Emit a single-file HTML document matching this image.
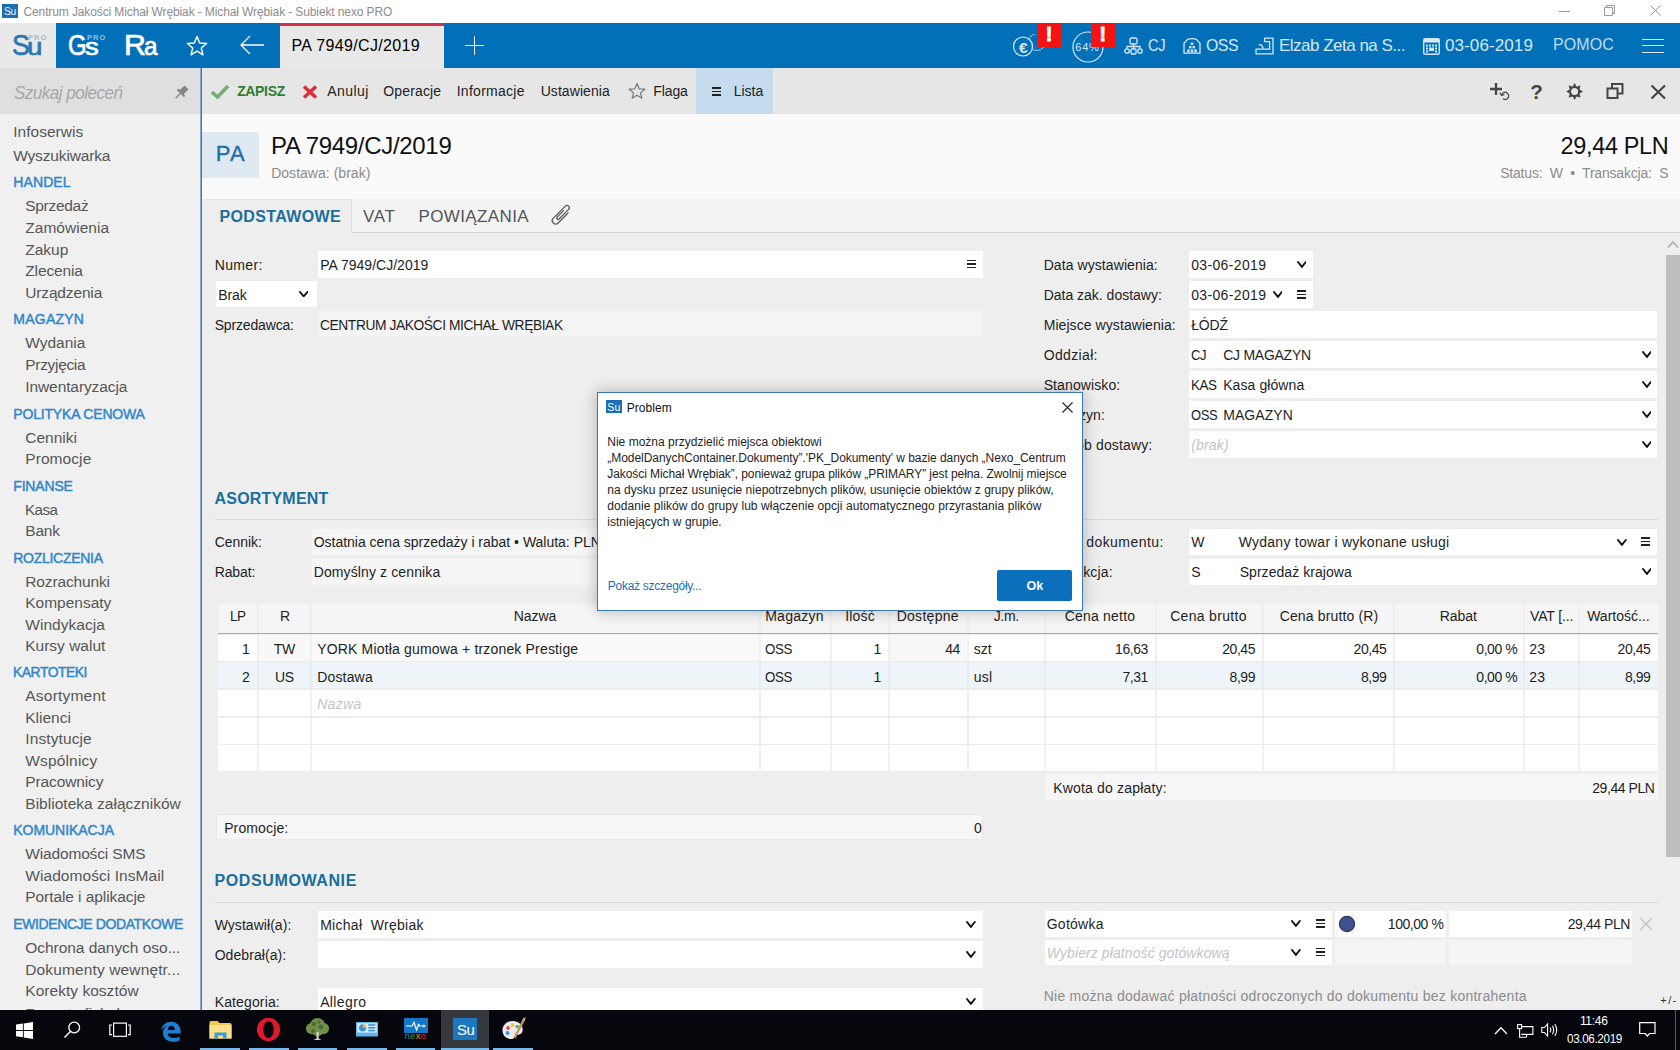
<!DOCTYPE html>
<html lang="pl"><head><meta charset="utf-8"><title>Subiekt nexo PRO</title>
<style>
html,body{margin:0;padding:0;}
body{width:1680px;height:1050px;overflow:hidden;position:relative;background:#eee;font-family:"Liberation Sans", sans-serif;}
.b{position:absolute;box-sizing:border-box;}
.t{position:absolute;white-space:pre;line-height:1;}
</style></head>
<body>
<div class="b" style="left:0px;top:0px;width:1680px;height:23px;background:#ffffff;"></div>
<div class="b" style="left:2px;top:4px;width:16px;height:14px;background:#1c6fb4;"></div>
<span class="t" style="font-size:10.5px;line-height:12px;color:#eaf4fc;top:5px;letter-spacing:-0.315px;transform:scaleX(0.9874);transform-origin:left center;left:4.17px;">Su</span>
<span class="t" style="font-size:12px;line-height:14px;color:#8c8c8c;top:5px;letter-spacing:-0.115px;left:23.48px;">Centrum Jakości Michał Wrębiak - Michał Wrębiak - Subiekt nexo PRO</span>
<div class="b" style="left:1559px;top:10.5px;width:10.5px;height:1px;background:#9a9a9a;"></div>
<svg class="b" style="left:1604px;top:5px;" width="11" height="11" viewBox="0 0 11 11"><path d="M2.5 2.5V0.5H10.5V8.5H8.5M0.5 2.5H8.5V10.5H0.5Z" fill="none" stroke="#9a9a9a" stroke-width="1"/></svg>
<svg class="b" style="left:1650px;top:5px;" width="11" height="11" viewBox="0 0 11 11"><path d="M0.5 0.5L10.5 10.5M10.5 0.5L0.5 10.5" fill="none" stroke="#9a9a9a" stroke-width="1"/></svg>
<div class="b" style="left:0px;top:23px;width:1680px;height:45px;background:#0270b9;"></div>
<div class="b" style="left:0px;top:23px;width:56px;height:45px;background:#e9e9e9;"></div>
<span class="t" style="font-size:29.5px;line-height:33px;color:#2878b4;top:28px;left:11.53px;-webkit-text-stroke:0.7px #2878b4;"><span style="display:inline-block;font-size:29.5px;width:15.76px;transform:scaleX(0.9011);transform-origin:left center;">S</span><span style="display:inline-block;font-size:23.5px;transform:scaleX(1.1791);transform-origin:left center;">u</span></span>
<span class="t" style="font-size:7.5px;line-height:9px;color:#9dbcd6;top:33px;font-weight:bold;letter-spacing:1.045px;left:28.05px;">PRO</span>
<span class="t" style="font-size:29.5px;line-height:33px;color:#fff;top:28px;left:67.93px;-webkit-text-stroke:0.7px #fff;"><span style="display:inline-block;font-size:29.5px;width:16.96px;transform:scaleX(0.8077);transform-origin:left center;">G</span><span style="display:inline-block;font-size:23.5px;transform:scaleX(1.1677);transform-origin:left center;">s</span></span>
<span class="t" style="font-size:7.5px;line-height:9px;color:#8fc0e6;top:33px;font-weight:bold;letter-spacing:1.045px;left:87.05px;">PRO</span>
<span class="t" style="font-size:29.5px;line-height:33px;color:#fff;top:28px;left:123.53px;-webkit-text-stroke:0.7px #fff;"><span style="display:inline-block;font-size:29.5px;width:20.27px;transform:scaleX(1.0294);transform-origin:left center;">R</span><span style="display:inline-block;font-size:25px;transform:scaleX(0.9708);transform-origin:left center;">a</span></span>
<svg class="b" style="left:186px;top:35px;" width="22" height="21" viewBox="0 0 22 21"><path d="M11 1.5 L13.7 8 L20.6 8.5 L15.3 13 L17 19.8 L11 16.1 L5 19.8 L6.7 13 L1.4 8.5 L8.3 8 Z" fill="none" stroke="#fff" stroke-width="1.4" stroke-linejoin="round"/></svg>
<svg class="b" style="left:239px;top:35px;" width="26" height="20" viewBox="0 0 26 20"><path d="M25 10H2M11 1L2 10L11 19" fill="none" stroke="#fff" stroke-width="1.3"/></svg>
<div class="b" style="left:280px;top:23px;width:164px;height:45px;background:#e8e8e8;"></div>
<div class="b" style="left:280px;top:23px;width:164px;height:3px;background:#d6304c;"></div>
<span class="t" style="font-size:16px;line-height:17px;color:#000;top:37px;letter-spacing:0.337px;left:291.54px;">PA 7949/CJ/2019</span>
<div class="b" style="left:464.5px;top:45px;width:19.5px;height:1px;background:#fff;"></div>
<div class="b" style="left:474px;top:36px;width:1px;height:19px;background:#fff;"></div>
<svg class="b" style="left:1011px;top:34px;" width="40" height="26" viewBox="0 0 40 26"><circle cx="26" cy="8" r="8.5" fill="none" stroke="#9cc6e8" stroke-width="1"/><circle cx="12" cy="12.5" r="9.5" fill="#0270b9" stroke="#d6e8f7" stroke-width="1.2"/></svg>
<span class="t" style="font-size:15.5px;line-height:17px;color:#d6e8f7;top:39px;font-weight:bold;left:1023.30px;width:0;display:flex;justify-content:center;">€</span>
<div class="b" style="left:1037.5px;top:23px;width:23px;height:23.5px;background:#f41212;"></div>
<span class="t" style="font-size:19.5px;line-height:22px;color:#fff;top:23px;font-weight:bold;left:1049.00px;width:0;display:flex;justify-content:center;-webkit-text-stroke:0.9px #fff;">!</span>
<svg class="b" style="left:1071px;top:30px;" width="34" height="34" viewBox="0 0 34 34"><circle cx="17" cy="17" r="15" fill="none" stroke="#d6e8f7" stroke-width="1.2"/></svg>
<span class="t" style="font-size:11px;line-height:12px;color:#d6e8f7;top:41px;letter-spacing:0.763px;left:1075.34px;">64%</span>
<div class="b" style="left:1091px;top:23px;width:23.5px;height:23.5px;background:#f41212;"></div>
<span class="t" style="font-size:19.5px;line-height:22px;color:#fff;top:23px;font-weight:bold;left:1102.70px;width:0;display:flex;justify-content:center;-webkit-text-stroke:0.9px #fff;">!</span>
<svg class="b" style="left:1124px;top:37px;" width="19" height="18" viewBox="0 0 19 18"><g fill="none" stroke="#d6e8f7" stroke-width="1.3"><rect x="6" y="1" width="7" height="6" rx="1.5"/><circle cx="3" cy="14" r="2.2"/><rect x="7" y="12" width="5" height="5" rx="1"/><circle cx="16" cy="14" r="2.2"/><path d="M9.5 7V12M9.5 9.5H3V11.8M9.5 9.5H16V11.8"/></g></svg>
<span class="t" style="font-size:17px;line-height:19px;color:#d6e8f7;top:36px;letter-spacing:-0.510px;transform:scaleX(0.8623);transform-origin:left center;left:1147.98px;">CJ</span>
<svg class="b" style="left:1182.5px;top:38px;" width="18" height="16" viewBox="0 0 18 16"><path d="M1 15.2V5.2L4.6 1.4Q9 0 13.4 1.4L17 5.2V15.2Z" fill="none" stroke="#d6e8f7" stroke-width="1.3" stroke-linejoin="round"/><g fill="#d6e8f7"><rect x="7.8" y="4.6" width="2.4" height="2.4"/><rect x="6" y="8" width="2.4" height="2.4"/><rect x="9.6" y="8" width="2.4" height="2.4"/><rect x="4.2" y="11.4" width="2.4" height="3"/><rect x="7.8" y="11.4" width="2.4" height="3"/><rect x="11.4" y="11.4" width="2.4" height="3"/></g></svg>
<span class="t" style="font-size:17px;line-height:19px;color:#d6e8f7;top:36px;letter-spacing:-0.510px;transform:scaleX(0.9320);transform-origin:left center;left:1206.48px;">OSS</span>
<svg class="b" style="left:1254.5px;top:36.5px;" width="19" height="18" viewBox="0 0 19 18"><g fill="none" stroke="#d6e8f7" stroke-width="1.3" stroke-linejoin="round"><path d="M1 12.2H14.6V4.6H9.6V1.2H18V16.8H1Z"/><path d="M3.6 7.6Q7.4 7 8 11.6"/></g></svg>
<span class="t" style="font-size:17px;line-height:19px;color:#d6e8f7;top:36px;letter-spacing:-0.506px;left:1278.98px;">Elzab Zeta na S...</span>
<svg class="b" style="left:1423px;top:37px;" width="17" height="18" viewBox="0 0 17 18"><rect x="0.7" y="1.7" width="15.6" height="15.6" rx="1.5" fill="none" stroke="#d6e8f7" stroke-width="1.4"/><rect x="1" y="2" width="15" height="3.5" fill="#d6e8f7"/><g fill="#d6e8f7"><rect x="3" y="7.5" width="2" height="2"/><rect x="6" y="7.5" width="2" height="2"/><rect x="9" y="7.5" width="2" height="2"/><rect x="12" y="7.5" width="2" height="2"/><rect x="3" y="10.5" width="2" height="2"/><rect x="6" y="10.5" width="5" height="3.5"/><rect x="12" y="10.5" width="2" height="2"/><rect x="3" y="13.5" width="2" height="2"/><rect x="12" y="13.5" width="2" height="2"/></g></svg>
<span class="t" style="font-size:17px;line-height:19px;color:#d6e8f7;top:36px;letter-spacing:0.107px;left:1444.98px;">03-06-2019</span>
<span class="t" style="font-size:16px;line-height:17px;color:#bfdcf3;top:36px;letter-spacing:0.093px;left:1553.04px;">POMOC</span>
<div class="b" style="left:1642px;top:39px;width:22px;height:1.2px;background:#d6e8f7;"></div>
<div class="b" style="left:1642px;top:45.3px;width:22px;height:1.2px;background:#d6e8f7;"></div>
<div class="b" style="left:1642px;top:51.6px;width:22px;height:1.2px;background:#d6e8f7;"></div>
<div class="b" style="left:0px;top:68px;width:200px;height:46px;background:#dfdfdf;"></div>
<div class="b" style="left:202px;top:68px;width:1478px;height:46px;background:#e6e6e6;"></div>
<span class="t" style="font-size:17.5px;line-height:20px;color:#a6a6a6;top:83px;font-style:italic;letter-spacing:-0.525px;transform:scaleX(0.9735);transform-origin:left center;left:13.65px;">Szukaj poleceń</span>
<svg class="b" style="left:172px;top:83.5px;" width="18" height="18" viewBox="0 0 18 18"><g transform="scale(1.12) rotate(45 8 8)" fill="#858585"><rect x="5.5" y="1" width="5" height="6.5"/><rect x="3.5" y="7" width="9" height="1.8"/><rect x="7.4" y="8.8" width="1.2" height="6"/></g></svg>
<svg class="b" style="left:210px;top:84px;" width="20" height="15" viewBox="0 0 20 15"><path d="M2 8L7.5 13L18 2" fill="none" stroke="#76ad76" stroke-width="3.7"/></svg>
<span class="t" style="font-size:14px;line-height:16px;color:#2f7d32;top:83px;font-weight:bold;letter-spacing:-0.350px;left:237.16px;">ZAPISZ</span>
<svg class="b" style="left:301.5px;top:84.5px;" width="16" height="14" viewBox="0 0 16 14"><path d="M2 1.5L14 12.5M14 1.5L2 12.5" fill="none" stroke="#dc2f3a" stroke-width="3.6"/></svg>
<span class="t" style="font-size:14px;line-height:16px;color:#222;top:83px;letter-spacing:0.460px;left:327.16px;">Anuluj</span>
<span class="t" style="font-size:14px;line-height:16px;color:#222;top:83px;letter-spacing:0.171px;left:383.16px;">Operacje</span>
<span class="t" style="font-size:14px;line-height:16px;color:#222;top:83px;letter-spacing:0.282px;left:456.66px;">Informacje</span>
<span class="t" style="font-size:14px;line-height:16px;color:#222;top:83px;letter-spacing:0.070px;left:540.66px;">Ustawienia</span>
<svg class="b" style="left:628px;top:81.5px;" width="18" height="17" viewBox="0 0 18 17"><path d="M9 1.5 L11.2 6.8 L16.8 7.2 L12.5 10.9 L13.9 16.3 L9 13.3 L4.1 16.3 L5.5 10.9 L1.2 7.2 L6.8 6.8 Z" fill="none" stroke="#777" stroke-width="1.2" stroke-linejoin="round"/></svg>
<span class="t" style="font-size:14px;line-height:16px;color:#222;top:83px;letter-spacing:-0.070px;left:653.16px;">Flaga</span>
<div class="b" style="left:696px;top:68px;width:77px;height:46px;background:#c5dcee;"></div>
<div class="b" style="left:712px;top:87px;width:9px;height:1.6px;background:#222;"></div>
<div class="b" style="left:712px;top:90.5px;width:9px;height:1.6px;background:#222;"></div>
<div class="b" style="left:712px;top:94px;width:9px;height:1.6px;background:#222;"></div>
<span class="t" style="font-size:14px;line-height:16px;color:#222;top:83px;letter-spacing:0.020px;left:733.66px;">Lista</span>
<svg class="b" style="left:1489px;top:82.3px;" width="22" height="18" viewBox="0 0 22 18"><path d="M7 1V13M1 7H13" fill="none" stroke="#454545" stroke-width="2.3"/><path d="M12.5 13.2A3.6 3.6 0 1 1 14 16.8" fill="none" stroke="#454545" stroke-width="1.2"/><path d="M10.8 10.8L12.6 13.6L15.4 12.4" fill="none" stroke="#454545" stroke-width="1.2"/></svg>
<span class="t" style="font-size:20.5px;line-height:23px;color:#454545;top:80px;font-weight:bold;left:1536.50px;width:0;display:flex;justify-content:center;">?</span>
<svg class="b" style="left:1565px;top:82px;" width="19" height="19" viewBox="0 0 19 19"><g transform="translate(9.6 9.5)"><g fill="#454545"><path d="M-1.9 -5L0 -8.4L1.9 -5Z" transform="rotate(0)"/><path d="M-1.9 -5L0 -8.4L1.9 -5Z" transform="rotate(45)"/><path d="M-1.9 -5L0 -8.4L1.9 -5Z" transform="rotate(90)"/><path d="M-1.9 -5L0 -8.4L1.9 -5Z" transform="rotate(135)"/><path d="M-1.9 -5L0 -8.4L1.9 -5Z" transform="rotate(180)"/><path d="M-1.9 -5L0 -8.4L1.9 -5Z" transform="rotate(225)"/><path d="M-1.9 -5L0 -8.4L1.9 -5Z" transform="rotate(270)"/><path d="M-1.9 -5L0 -8.4L1.9 -5Z" transform="rotate(315)"/></g><circle r="5.5" fill="#454545"/><circle r="3.5" fill="#e6e6e6"/></g></svg>
<svg class="b" style="left:1606px;top:83.2px;" width="18" height="16" viewBox="0 0 18 16"><path d="M6 4.5V1H16.5V10.5H12M1.5 5.5H11.5V15H1.5Z" fill="none" stroke="#454545" stroke-width="2"/></svg>
<svg class="b" style="left:1650px;top:83.6px;" width="17" height="16" viewBox="0 0 17 16"><path d="M1.5 1.5L15 14.5M15 1.5L1.5 14.5" fill="none" stroke="#454545" stroke-width="2.2"/></svg>
<div class="b" style="left:0px;top:114px;width:200px;height:896px;background:#f0f0f0;"></div>
<div class="b" style="left:200px;top:68px;width:1px;height:942px;background:#86aed0;"></div>
<div class="b" style="left:201px;top:68px;width:1px;height:942px;background:#3779b2;"></div>
<span class="t" style="font-size:15.5px;line-height:17px;color:#565656;top:123px;letter-spacing:0.038px;left:13.17px;">Infoserwis</span>
<span class="t" style="font-size:15.5px;line-height:17px;color:#565656;top:147px;letter-spacing:-0.146px;left:13.17px;">Wyszukiwarka</span>
<span class="t" style="font-size:14px;line-height:16px;color:#2f86c9;top:174px;letter-spacing:0.114px;left:13.26px;-webkit-text-stroke:0.45px #2f86c9;">HANDEL</span>
<span class="t" style="font-size:15.5px;line-height:17px;color:#565656;top:197px;letter-spacing:-0.303px;left:25.27px;">Sprzedaż</span>
<span class="t" style="font-size:15.5px;line-height:17px;color:#565656;top:219px;letter-spacing:0.020px;left:25.27px;">Zamówienia</span>
<span class="t" style="font-size:15.5px;line-height:17px;color:#565656;top:241px;letter-spacing:-0.007px;left:25.27px;">Zakup</span>
<span class="t" style="font-size:15.5px;line-height:17px;color:#565656;top:262px;letter-spacing:-0.129px;left:25.27px;">Zlecenia</span>
<span class="t" style="font-size:15.5px;line-height:17px;color:#565656;top:284px;letter-spacing:-0.155px;left:25.27px;">Urządzenia</span>
<span class="t" style="font-size:14px;line-height:16px;color:#2f86c9;top:311px;letter-spacing:0.249px;left:13.26px;-webkit-text-stroke:0.45px #2f86c9;">MAGAZYN</span>
<span class="t" style="font-size:15.5px;line-height:17px;color:#565656;top:334px;letter-spacing:-0.016px;left:25.27px;">Wydania</span>
<span class="t" style="font-size:15.5px;line-height:17px;color:#565656;top:356px;letter-spacing:-0.315px;left:25.27px;">Przyjęcia</span>
<span class="t" style="font-size:15.5px;line-height:17px;color:#565656;top:378px;letter-spacing:-0.095px;left:25.27px;">Inwentaryzacja</span>
<span class="t" style="font-size:14px;line-height:16px;color:#2f86c9;top:406px;letter-spacing:-0.173px;left:13.26px;-webkit-text-stroke:0.45px #2f86c9;">POLITYKA CENOWA</span>
<span class="t" style="font-size:15.5px;line-height:17px;color:#565656;top:429px;letter-spacing:-0.020px;left:25.27px;">Cenniki</span>
<span class="t" style="font-size:15.5px;line-height:17px;color:#565656;top:450px;letter-spacing:0.074px;left:25.27px;">Promocje</span>
<span class="t" style="font-size:14px;line-height:16px;color:#2f86c9;top:478px;letter-spacing:-0.172px;left:13.26px;-webkit-text-stroke:0.45px #2f86c9;">FINANSE</span>
<span class="t" style="font-size:15.5px;line-height:17px;color:#565656;top:501px;letter-spacing:-0.465px;transform:scaleX(0.9724);transform-origin:left center;left:25.27px;">Kasa</span>
<span class="t" style="font-size:15.5px;line-height:17px;color:#565656;top:522px;letter-spacing:-0.196px;left:25.27px;">Bank</span>
<span class="t" style="font-size:14px;line-height:16px;color:#2f86c9;top:550px;letter-spacing:-0.282px;left:13.26px;-webkit-text-stroke:0.45px #2f86c9;">ROZLICZENIA</span>
<span class="t" style="font-size:15.5px;line-height:17px;color:#565656;top:573px;letter-spacing:-0.145px;left:25.27px;">Rozrachunki</span>
<span class="t" style="font-size:15.5px;line-height:17px;color:#565656;top:594px;letter-spacing:-0.011px;left:25.27px;">Kompensaty</span>
<span class="t" style="font-size:15.5px;line-height:17px;color:#565656;top:616px;letter-spacing:0.031px;left:25.27px;">Windykacja</span>
<span class="t" style="font-size:15.5px;line-height:17px;color:#565656;top:637px;letter-spacing:-0.006px;left:25.27px;">Kursy walut</span>
<span class="t" style="font-size:14px;line-height:16px;color:#2f86c9;top:664px;letter-spacing:-0.420px;transform:scaleX(0.9856);transform-origin:left center;left:13.26px;-webkit-text-stroke:0.45px #2f86c9;">KARTOTEKI</span>
<span class="t" style="font-size:15.5px;line-height:17px;color:#565656;top:687px;letter-spacing:0.217px;left:25.27px;">Asortyment</span>
<span class="t" style="font-size:15.5px;line-height:17px;color:#565656;top:709px;letter-spacing:-0.016px;left:25.27px;">Klienci</span>
<span class="t" style="font-size:15.5px;line-height:17px;color:#565656;top:730px;letter-spacing:0.108px;left:25.27px;">Instytucje</span>
<span class="t" style="font-size:15.5px;line-height:17px;color:#565656;top:752px;letter-spacing:0.158px;left:25.27px;">Wspólnicy</span>
<span class="t" style="font-size:15.5px;line-height:17px;color:#565656;top:773px;letter-spacing:-0.119px;left:25.27px;">Pracownicy</span>
<span class="t" style="font-size:15.5px;line-height:17px;color:#565656;top:795px;letter-spacing:0.022px;left:25.27px;">Biblioteka załączników</span>
<span class="t" style="font-size:14px;line-height:16px;color:#2f86c9;top:822px;letter-spacing:-0.040px;left:13.26px;-webkit-text-stroke:0.45px #2f86c9;">KOMUNIKACJA</span>
<span class="t" style="font-size:15.5px;line-height:17px;color:#565656;top:845px;letter-spacing:-0.161px;left:25.27px;">Wiadomości SMS</span>
<span class="t" style="font-size:15.5px;line-height:17px;color:#565656;top:867px;letter-spacing:0.069px;left:25.27px;">Wiadomości InsMail</span>
<span class="t" style="font-size:15.5px;line-height:17px;color:#565656;top:888px;letter-spacing:-0.075px;left:25.27px;">Portale i aplikacje</span>
<span class="t" style="font-size:14px;line-height:16px;color:#2f86c9;top:916px;letter-spacing:-0.384px;left:13.26px;-webkit-text-stroke:0.45px #2f86c9;">EWIDENCJE DODATKOWE</span>
<span class="t" style="font-size:15.5px;line-height:17px;color:#565656;top:939px;letter-spacing:-0.043px;left:25.27px;">Ochrona danych oso...</span>
<span class="t" style="font-size:15.5px;line-height:17px;color:#565656;top:961px;letter-spacing:0.129px;left:25.27px;">Dokumenty wewnętr...</span>
<span class="t" style="font-size:15.5px;line-height:17px;color:#565656;top:982px;letter-spacing:0.033px;left:25.27px;">Korekty kosztów</span>
<span class="t" style="font-size:15.5px;line-height:17px;color:#565656;top:1005px;letter-spacing:0.057px;left:25.27px;">Raporty fiskalne</span>
<div class="b" style="left:202px;top:114px;width:1478px;height:85px;background:#fafafa;"></div>
<div class="b" style="left:202px;top:132px;width:57px;height:46px;background:#dfe9f2;"></div>
<span class="t" style="font-size:22px;line-height:25px;color:#1f6ea6;top:141px;letter-spacing:1.211px;left:215.68px;-webkit-text-stroke:0.4px #1f6ea6;">PA</span>
<span class="t" style="font-size:24px;line-height:27px;color:#111;top:132px;letter-spacing:-0.310px;left:271.06px;">PA 7949/CJ/2019</span>
<span class="t" style="font-size:14px;line-height:16px;color:#8c8c8c;top:165px;letter-spacing:0.025px;left:271.16px;">Dostawa: (brak)</span>
<span class="t" style="font-size:23.5px;line-height:26px;color:#111;top:133px;letter-spacing:-0.360px;left:1560.59px;">29,44 PLN</span>
<span class="t" style="font-size:14px;line-height:16px;color:#8c8c8c;top:165px;letter-spacing:-0.192px;left:1500.16px;">Status:  W  •  Transakcja:  S</span>
<div class="b" style="left:202px;top:199px;width:1478px;height:33px;background:#f3f3f3;"></div>
<div class="b" style="left:351px;top:232px;width:1329px;height:1px;background:#d2d2d2;"></div>
<div class="b" style="left:202px;top:199px;width:149.5px;height:34px;background:#eeeeee;border-right:1px solid #dcdcdc;border-top:1px solid #e6e6e6;"></div>
<span class="t" style="font-size:16px;line-height:17px;color:#1b6e9c;top:208px;font-weight:bold;letter-spacing:0.350px;left:219.54px;">PODSTAWOWE</span>
<span class="t" style="font-size:17px;line-height:19px;color:#555;top:207px;letter-spacing:0.664px;left:362.98px;">VAT</span>
<span class="t" style="font-size:17px;line-height:19px;color:#555;top:207px;letter-spacing:0.381px;left:418.48px;">POWIĄZANIA</span>
<svg class="b" style="left:549px;top:202px;" width="26" height="26" viewBox="0 0 26 26"><g transform="translate(12.5 12.8) rotate(-45) translate(-12.15 0)"><path d="M18 3.4L4 3.4A3.4 3.4 0 0 1 4 -3.4L21 -3.4A2.3 2.3 0 0 1 21 1.2L7.5 1.2A1.35 1.35 0 0 1 7.5 -1.5L16.5 -1.5" fill="none" stroke="#5a5a5a" stroke-width="1.3" stroke-linecap="round"/></g></svg>
<span class="t" style="font-size:14px;line-height:16px;color:#1e1e1e;top:257px;letter-spacing:0.379px;left:214.66px;">Numer:</span>
<div class="b" style="left:318px;top:251.2px;width:665px;height:26.6px;background:#fff;"></div>
<span class="t" style="font-size:14px;line-height:16px;color:#1e1e1e;top:257px;letter-spacing:0.016px;left:320.16px;">PA 7949/CJ/2019</span>
<div class="b" style="left:967px;top:259.5px;width:9px;height:1.6px;background:#222;"></div>
<div class="b" style="left:967px;top:263px;width:9px;height:1.6px;background:#222;"></div>
<div class="b" style="left:967px;top:266.5px;width:9px;height:1.6px;background:#222;"></div>
<div class="b" style="left:215.5px;top:281px;width:101px;height:25.5px;background:#fff;"></div>
<span class="t" style="font-size:14px;line-height:16px;color:#1e1e1e;top:287px;letter-spacing:-0.029px;left:218.16px;">Brak</span>
<svg class="b" style="left:299.1px;top:290.8px;" width="9.3" height="6.4" viewBox="0 0 9.3 6.4"><path d="M1 1 L4.65 5.4 L8.3 1" fill="none" stroke="#111" stroke-width="1.9" stroke-linecap="round" stroke-linejoin="round"/></svg>
<span class="t" style="font-size:14px;line-height:16px;color:#1e1e1e;top:317px;letter-spacing:-0.160px;left:214.66px;">Sprzedawca:</span>
<div class="b" style="left:318px;top:310.5px;width:665px;height:25.5px;background:#f4f4f4;"></div>
<span class="t" style="font-size:14px;line-height:16px;color:#1e1e1e;top:317px;letter-spacing:-0.420px;transform:scaleX(0.9848);transform-origin:left center;left:320.16px;">CENTRUM JAKOŚCI MICHAŁ WRĘBIAK</span>
<span class="t" style="font-size:14px;line-height:16px;color:#1e1e1e;top:257px;letter-spacing:0.080px;left:1043.66px;">Data wystawienia:</span>
<div class="b" style="left:1189px;top:251.2px;width:123.5px;height:26.6px;background:#fff;"></div>
<span class="t" style="font-size:14px;line-height:16px;color:#1e1e1e;top:287px;letter-spacing:-0.006px;left:1043.66px;">Data zak. dostawy:</span>
<div class="b" style="left:1189px;top:281.2px;width:123.5px;height:26.6px;background:#fff;"></div>
<span class="t" style="font-size:14px;line-height:16px;color:#1e1e1e;top:317px;letter-spacing:0.073px;left:1043.66px;">Miejsce wystawienia:</span>
<div class="b" style="left:1189px;top:311.2px;width:468px;height:26.6px;background:#fff;"></div>
<span class="t" style="font-size:14px;line-height:16px;color:#1e1e1e;top:347px;letter-spacing:0.353px;left:1043.66px;">Oddział:</span>
<div class="b" style="left:1189px;top:341.2px;width:468px;height:26.6px;background:#fff;"></div>
<span class="t" style="font-size:14px;line-height:16px;color:#1e1e1e;top:377px;letter-spacing:0.109px;left:1043.66px;">Stanowisko:</span>
<div class="b" style="left:1189px;top:371.2px;width:468px;height:26.6px;background:#fff;"></div>
<span class="t" style="font-size:14px;line-height:16px;color:#1e1e1e;top:407px;letter-spacing:0.060px;left:1043.66px;">Magazyn:</span>
<div class="b" style="left:1189px;top:401.2px;width:468px;height:26.6px;background:#fff;"></div>
<span class="t" style="font-size:14px;line-height:16px;color:#1e1e1e;top:437px;letter-spacing:0.137px;left:1043.66px;">Sposób dostawy:</span>
<div class="b" style="left:1189px;top:431.2px;width:468px;height:26.6px;background:#fff;"></div>
<span class="t" style="font-size:14px;line-height:16px;color:#1e1e1e;top:257px;letter-spacing:0.356px;left:1191.16px;">03-06-2019</span>
<svg class="b" style="left:1296.6px;top:261.3px;" width="9.8" height="6.9" viewBox="0 0 9.8 6.9"><path d="M1 1 L4.9 5.9 L8.8 1" fill="none" stroke="#111" stroke-width="1.9" stroke-linecap="round" stroke-linejoin="round"/></svg>
<span class="t" style="font-size:14px;line-height:16px;color:#1e1e1e;top:287px;letter-spacing:0.356px;left:1191.16px;">03-06-2019</span>
<svg class="b" style="left:1272.6px;top:291.3px;" width="9.8" height="6.9" viewBox="0 0 9.8 6.9"><path d="M1 1 L4.9 5.9 L8.8 1" fill="none" stroke="#111" stroke-width="1.9" stroke-linecap="round" stroke-linejoin="round"/></svg>
<div class="b" style="left:1297px;top:290px;width:9px;height:1.6px;background:#222;"></div>
<div class="b" style="left:1297px;top:293.5px;width:9px;height:1.6px;background:#222;"></div>
<div class="b" style="left:1297px;top:297px;width:9px;height:1.6px;background:#222;"></div>
<span class="t" style="font-size:14px;line-height:16px;color:#1e1e1e;top:317px;letter-spacing:-0.166px;left:1191.16px;">ŁÓDŹ</span>
<span class="t" style="font-size:14px;line-height:16px;color:#1e1e1e;top:347px;letter-spacing:-0.420px;transform:scaleX(0.9321);transform-origin:left center;left:1191.16px;">CJ</span>
<span class="t" style="font-size:14px;line-height:16px;color:#1e1e1e;top:347px;letter-spacing:-0.255px;left:1223.16px;">CJ MAGAZYN</span>
<span class="t" style="font-size:14px;line-height:16px;color:#1e1e1e;top:377px;letter-spacing:-0.420px;transform:scaleX(0.9598);transform-origin:left center;left:1191.16px;">KAS</span>
<span class="t" style="font-size:14px;line-height:16px;color:#1e1e1e;top:377px;letter-spacing:0.092px;left:1223.16px;">Kasa główna</span>
<span class="t" style="font-size:14px;line-height:16px;color:#1e1e1e;top:407px;letter-spacing:-0.420px;transform:scaleX(0.9245);transform-origin:left center;left:1191.16px;">OSS</span>
<span class="t" style="font-size:14px;line-height:16px;color:#1e1e1e;top:407px;letter-spacing:0.064px;left:1223.16px;">MAGAZYN</span>
<span class="t" style="font-size:14px;line-height:16px;color:#c2c2c2;top:437px;font-style:italic;letter-spacing:0.186px;left:1191.16px;">(brak)</span>
<svg class="b" style="left:1641.6px;top:351.3px;" width="9.8" height="6.9" viewBox="0 0 9.8 6.9"><path d="M1 1 L4.9 5.9 L8.8 1" fill="none" stroke="#111" stroke-width="1.9" stroke-linecap="round" stroke-linejoin="round"/></svg>
<svg class="b" style="left:1641.6px;top:381.3px;" width="9.8" height="6.9" viewBox="0 0 9.8 6.9"><path d="M1 1 L4.9 5.9 L8.8 1" fill="none" stroke="#111" stroke-width="1.9" stroke-linecap="round" stroke-linejoin="round"/></svg>
<svg class="b" style="left:1641.6px;top:411.3px;" width="9.8" height="6.9" viewBox="0 0 9.8 6.9"><path d="M1 1 L4.9 5.9 L8.8 1" fill="none" stroke="#111" stroke-width="1.9" stroke-linecap="round" stroke-linejoin="round"/></svg>
<svg class="b" style="left:1641.6px;top:441.3px;" width="9.8" height="6.9" viewBox="0 0 9.8 6.9"><path d="M1 1 L4.9 5.9 L8.8 1" fill="none" stroke="#111" stroke-width="1.9" stroke-linecap="round" stroke-linejoin="round"/></svg>
<span class="t" style="font-size:16px;line-height:17px;color:#1b6e9c;top:490px;font-weight:bold;letter-spacing:0.192px;left:214.54px;">ASORTYMENT</span>
<div class="b" style="left:215px;top:519px;width:1443px;height:1px;background:#dadada;"></div>
<span class="t" style="font-size:14px;line-height:16px;color:#1e1e1e;top:534px;letter-spacing:-0.041px;left:214.66px;">Cennik:</span>
<div class="b" style="left:312px;top:529px;width:671px;height:25.5px;background:#f5f5f5;"></div>
<span class="t" style="font-size:14px;line-height:16px;color:#1e1e1e;top:534px;letter-spacing:-0.010px;left:313.66px;">Ostatnia cena sprzedaży i rabat • Waluta: PLN</span>
<span class="t" style="font-size:14px;line-height:16px;color:#1e1e1e;top:564px;letter-spacing:-0.095px;left:214.66px;">Rabat:</span>
<div class="b" style="left:312px;top:559px;width:671px;height:25.5px;background:#f5f5f5;"></div>
<span class="t" style="font-size:14px;line-height:16px;color:#1e1e1e;top:564px;letter-spacing:0.121px;left:313.66px;">Domyślny z cennika</span>
<span class="t" style="font-size:14px;line-height:16px;color:#1e1e1e;top:534px;left:1043.66px;"><span style="display:inline-block;width:42.50px;letter-spacing:-0.420px;">Status </span><span style="display:inline-block;letter-spacing:0.451px;">dokumentu:</span></span>
<div class="b" style="left:1189px;top:528.5px;width:468px;height:26px;background:#fff;"></div>
<span class="t" style="font-size:14px;line-height:16px;color:#1e1e1e;top:534px;letter-spacing:1.461px;left:1191.16px;">W</span>
<span class="t" style="font-size:14px;line-height:16px;color:#1e1e1e;top:534px;letter-spacing:0.257px;left:1238.66px;">Wydany towar i wykonane usługi</span>
<svg class="b" style="left:1617.1px;top:538.8px;" width="9.8" height="6.9" viewBox="0 0 9.8 6.9"><path d="M1 1 L4.9 5.9 L8.8 1" fill="none" stroke="#111" stroke-width="1.9" stroke-linecap="round" stroke-linejoin="round"/></svg>
<div class="b" style="left:1641px;top:537px;width:9px;height:1.6px;background:#222;"></div>
<div class="b" style="left:1641px;top:540.5px;width:9px;height:1.6px;background:#222;"></div>
<div class="b" style="left:1641px;top:544px;width:9px;height:1.6px;background:#222;"></div>
<span class="t" style="font-size:14px;line-height:16px;color:#1e1e1e;top:564px;left:1043.66px;"><span style="display:inline-block;width:39.50px;letter-spacing:-0.730px;">Transa</span><span style="display:inline-block;letter-spacing:0.177px;">kcja:</span></span>
<div class="b" style="left:1189px;top:558.5px;width:468px;height:26px;background:#fff;"></div>
<span class="t" style="font-size:14px;line-height:16px;color:#1e1e1e;top:564px;letter-spacing:0.336px;left:1191.16px;">S</span>
<span class="t" style="font-size:14px;line-height:16px;color:#1e1e1e;top:564px;letter-spacing:0.056px;left:1239.66px;">Sprzedaż krajowa</span>
<svg class="b" style="left:1641.6px;top:568.3px;" width="9.8" height="6.9" viewBox="0 0 9.8 6.9"><path d="M1 1 L4.9 5.9 L8.8 1" fill="none" stroke="#111" stroke-width="1.9" stroke-linecap="round" stroke-linejoin="round"/></svg>
<div class="b" style="left:217.5px;top:603.5px;width:1440px;height:29px;background:#f5f5f5;"></div>
<div class="b" style="left:217.5px;top:632.5px;width:1440px;height:1.7px;background:#a9a9a9;"></div>
<div class="b" style="left:257px;top:603.5px;width:2px;height:29px;background:#eeeeee;"></div>
<div class="b" style="left:310px;top:603.5px;width:2px;height:29px;background:#eeeeee;"></div>
<div class="b" style="left:758.5px;top:603.5px;width:2px;height:29px;background:#eeeeee;"></div>
<div class="b" style="left:829.5px;top:603.5px;width:2px;height:29px;background:#eeeeee;"></div>
<div class="b" style="left:887.8px;top:603.5px;width:2px;height:29px;background:#eeeeee;"></div>
<div class="b" style="left:966.5px;top:603.5px;width:2px;height:29px;background:#eeeeee;"></div>
<div class="b" style="left:1044px;top:603.5px;width:2px;height:29px;background:#eeeeee;"></div>
<div class="b" style="left:1155px;top:603.5px;width:2px;height:29px;background:#eeeeee;"></div>
<div class="b" style="left:1262px;top:603.5px;width:2px;height:29px;background:#eeeeee;"></div>
<div class="b" style="left:1392.8px;top:603.5px;width:2px;height:29px;background:#eeeeee;"></div>
<div class="b" style="left:1522.8px;top:603.5px;width:2px;height:29px;background:#eeeeee;"></div>
<div class="b" style="left:1577.8px;top:603.5px;width:2px;height:29px;background:#eeeeee;"></div>
<div class="b" style="left:217.5px;top:634.5px;width:1440px;height:136.5px;background:#ececec;"></div>
<div class="b" style="left:217.5px;top:634.5px;width:1440px;height:26px;background:#ffffff;"></div>
<div class="b" style="left:257px;top:634.5px;width:2px;height:26px;background:#f0f0f0;"></div>
<div class="b" style="left:310px;top:634.5px;width:2px;height:26px;background:#f0f0f0;"></div>
<div class="b" style="left:758.5px;top:634.5px;width:2px;height:26px;background:#f0f0f0;"></div>
<div class="b" style="left:829.5px;top:634.5px;width:2px;height:26px;background:#f0f0f0;"></div>
<div class="b" style="left:887.8px;top:634.5px;width:2px;height:26px;background:#f0f0f0;"></div>
<div class="b" style="left:966.5px;top:634.5px;width:2px;height:26px;background:#f0f0f0;"></div>
<div class="b" style="left:1044px;top:634.5px;width:2px;height:26px;background:#f0f0f0;"></div>
<div class="b" style="left:1155px;top:634.5px;width:2px;height:26px;background:#f0f0f0;"></div>
<div class="b" style="left:1262px;top:634.5px;width:2px;height:26px;background:#f0f0f0;"></div>
<div class="b" style="left:1392.8px;top:634.5px;width:2px;height:26px;background:#f0f0f0;"></div>
<div class="b" style="left:1522.8px;top:634.5px;width:2px;height:26px;background:#f0f0f0;"></div>
<div class="b" style="left:1577.8px;top:634.5px;width:2px;height:26px;background:#f0f0f0;"></div>
<div class="b" style="left:217.5px;top:662px;width:1440px;height:26px;background:#edf5f9;"></div>
<div class="b" style="left:257px;top:662px;width:2px;height:26px;background:#e6eef3;"></div>
<div class="b" style="left:310px;top:662px;width:2px;height:26px;background:#e6eef3;"></div>
<div class="b" style="left:758.5px;top:662px;width:2px;height:26px;background:#e6eef3;"></div>
<div class="b" style="left:829.5px;top:662px;width:2px;height:26px;background:#e6eef3;"></div>
<div class="b" style="left:887.8px;top:662px;width:2px;height:26px;background:#e6eef3;"></div>
<div class="b" style="left:966.5px;top:662px;width:2px;height:26px;background:#e6eef3;"></div>
<div class="b" style="left:1044px;top:662px;width:2px;height:26px;background:#e6eef3;"></div>
<div class="b" style="left:1155px;top:662px;width:2px;height:26px;background:#e6eef3;"></div>
<div class="b" style="left:1262px;top:662px;width:2px;height:26px;background:#e6eef3;"></div>
<div class="b" style="left:1392.8px;top:662px;width:2px;height:26px;background:#e6eef3;"></div>
<div class="b" style="left:1522.8px;top:662px;width:2px;height:26px;background:#e6eef3;"></div>
<div class="b" style="left:1577.8px;top:662px;width:2px;height:26px;background:#e6eef3;"></div>
<div class="b" style="left:217.5px;top:689.5px;width:1440px;height:26px;background:#ffffff;"></div>
<div class="b" style="left:257px;top:689.5px;width:2px;height:26px;background:#f0f0f0;"></div>
<div class="b" style="left:310px;top:689.5px;width:2px;height:26px;background:#f0f0f0;"></div>
<div class="b" style="left:758.5px;top:689.5px;width:2px;height:26px;background:#f0f0f0;"></div>
<div class="b" style="left:829.5px;top:689.5px;width:2px;height:26px;background:#f0f0f0;"></div>
<div class="b" style="left:887.8px;top:689.5px;width:2px;height:26px;background:#f0f0f0;"></div>
<div class="b" style="left:966.5px;top:689.5px;width:2px;height:26px;background:#f0f0f0;"></div>
<div class="b" style="left:1044px;top:689.5px;width:2px;height:26px;background:#f0f0f0;"></div>
<div class="b" style="left:1155px;top:689.5px;width:2px;height:26px;background:#f0f0f0;"></div>
<div class="b" style="left:1262px;top:689.5px;width:2px;height:26px;background:#f0f0f0;"></div>
<div class="b" style="left:1392.8px;top:689.5px;width:2px;height:26px;background:#f0f0f0;"></div>
<div class="b" style="left:1522.8px;top:689.5px;width:2px;height:26px;background:#f0f0f0;"></div>
<div class="b" style="left:1577.8px;top:689.5px;width:2px;height:26px;background:#f0f0f0;"></div>
<div class="b" style="left:217.5px;top:717.5px;width:1440px;height:26px;background:#ffffff;"></div>
<div class="b" style="left:257px;top:717.5px;width:2px;height:26px;background:#f0f0f0;"></div>
<div class="b" style="left:310px;top:717.5px;width:2px;height:26px;background:#f0f0f0;"></div>
<div class="b" style="left:758.5px;top:717.5px;width:2px;height:26px;background:#f0f0f0;"></div>
<div class="b" style="left:829.5px;top:717.5px;width:2px;height:26px;background:#f0f0f0;"></div>
<div class="b" style="left:887.8px;top:717.5px;width:2px;height:26px;background:#f0f0f0;"></div>
<div class="b" style="left:966.5px;top:717.5px;width:2px;height:26px;background:#f0f0f0;"></div>
<div class="b" style="left:1044px;top:717.5px;width:2px;height:26px;background:#f0f0f0;"></div>
<div class="b" style="left:1155px;top:717.5px;width:2px;height:26px;background:#f0f0f0;"></div>
<div class="b" style="left:1262px;top:717.5px;width:2px;height:26px;background:#f0f0f0;"></div>
<div class="b" style="left:1392.8px;top:717.5px;width:2px;height:26px;background:#f0f0f0;"></div>
<div class="b" style="left:1522.8px;top:717.5px;width:2px;height:26px;background:#f0f0f0;"></div>
<div class="b" style="left:1577.8px;top:717.5px;width:2px;height:26px;background:#f0f0f0;"></div>
<div class="b" style="left:217.5px;top:745px;width:1440px;height:26px;background:#ffffff;"></div>
<div class="b" style="left:257px;top:745px;width:2px;height:26px;background:#f0f0f0;"></div>
<div class="b" style="left:310px;top:745px;width:2px;height:26px;background:#f0f0f0;"></div>
<div class="b" style="left:758.5px;top:745px;width:2px;height:26px;background:#f0f0f0;"></div>
<div class="b" style="left:829.5px;top:745px;width:2px;height:26px;background:#f0f0f0;"></div>
<div class="b" style="left:887.8px;top:745px;width:2px;height:26px;background:#f0f0f0;"></div>
<div class="b" style="left:966.5px;top:745px;width:2px;height:26px;background:#f0f0f0;"></div>
<div class="b" style="left:1044px;top:745px;width:2px;height:26px;background:#f0f0f0;"></div>
<div class="b" style="left:1155px;top:745px;width:2px;height:26px;background:#f0f0f0;"></div>
<div class="b" style="left:1262px;top:745px;width:2px;height:26px;background:#f0f0f0;"></div>
<div class="b" style="left:1392.8px;top:745px;width:2px;height:26px;background:#f0f0f0;"></div>
<div class="b" style="left:1522.8px;top:745px;width:2px;height:26px;background:#f0f0f0;"></div>
<div class="b" style="left:1577.8px;top:745px;width:2px;height:26px;background:#f0f0f0;"></div>
<div class="b" style="left:889.8px;top:634.5px;width:76.7px;height:26px;background:#f7f7f7;"></div>
<div class="b" style="left:259px;top:634.5px;width:51px;height:26px;background:#f8f8f8;"></div>
<div class="b" style="left:312px;top:634.5px;width:446.5px;height:26px;background:#f9f9f9;"></div>
<span class="t" style="font-size:14px;line-height:16px;color:#1e1e1e;top:608px;letter-spacing:-0.420px;transform:scaleX(0.9628);transform-origin:left center;left:229.66px;">LP</span>
<span class="t" style="font-size:14px;line-height:16px;color:#1e1e1e;top:608px;letter-spacing:-0.420px;transform:scaleX(0.9974);transform-origin:left center;left:279.66px;">R</span>
<span class="t" style="font-size:14px;line-height:16px;color:#1e1e1e;top:608px;letter-spacing:-0.023px;left:513.66px;">Nazwa</span>
<span class="t" style="font-size:14px;line-height:16px;color:#1e1e1e;top:608px;letter-spacing:0.267px;left:765.16px;">Magazyn</span>
<span class="t" style="font-size:14px;line-height:16px;color:#1e1e1e;top:608px;letter-spacing:0.177px;left:845.16px;">Ilość</span>
<span class="t" style="font-size:14px;line-height:16px;color:#1e1e1e;top:608px;letter-spacing:0.280px;left:896.66px;">Dostępne</span>
<span class="t" style="font-size:14px;line-height:16px;color:#1e1e1e;top:608px;letter-spacing:-0.318px;left:993.66px;">J.m.</span>
<span class="t" style="font-size:14px;line-height:16px;color:#1e1e1e;top:608px;letter-spacing:0.218px;left:1064.66px;">Cena netto</span>
<span class="t" style="font-size:14px;line-height:16px;color:#1e1e1e;top:608px;letter-spacing:0.319px;left:1170.16px;">Cena brutto</span>
<span class="t" style="font-size:14px;line-height:16px;color:#1e1e1e;top:608px;letter-spacing:0.146px;left:1279.66px;">Cena brutto (R)</span>
<span class="t" style="font-size:14px;line-height:16px;color:#1e1e1e;top:608px;letter-spacing:-0.036px;left:1439.66px;">Rabat</span>
<span class="t" style="font-size:14px;line-height:16px;color:#1e1e1e;top:608px;letter-spacing:-0.122px;left:1529.96px;">VAT [...</span>
<span class="t" style="font-size:14px;line-height:16px;color:#1e1e1e;top:608px;left:1587.16px;">Wartość...</span>
<span class="t" style="font-size:14px;line-height:16px;color:#1e1e1e;top:641px;right:1430.16px;">1</span>
<span class="t" style="font-size:14px;line-height:16px;color:#1e1e1e;top:641px;letter-spacing:-0.450px;left:284.30px;width:0;display:flex;justify-content:center;">TW</span>
<span class="t" style="font-size:14px;line-height:16px;color:#1e1e1e;top:641px;letter-spacing:0.171px;left:317.16px;">YORK Miotła gumowa + trzonek Prestige</span>
<span class="t" style="font-size:14px;line-height:16px;color:#1e1e1e;top:641px;letter-spacing:-0.420px;transform:scaleX(0.9492);transform-origin:left center;left:764.96px;">OSS</span>
<span class="t" style="font-size:14px;line-height:16px;color:#1e1e1e;top:641px;right:798.66px;">1</span>
<span class="t" style="font-size:14px;line-height:16px;color:#1e1e1e;top:641px;letter-spacing:-0.450px;right:720.11px;">44</span>
<span class="t" style="font-size:14px;line-height:16px;color:#1e1e1e;top:641px;letter-spacing:0.096px;left:973.66px;">szt</span>
<span class="t" style="font-size:14px;line-height:16px;color:#1e1e1e;top:641px;letter-spacing:-0.450px;right:532.11px;">16,63</span>
<span class="t" style="font-size:14px;line-height:16px;color:#1e1e1e;top:641px;letter-spacing:-0.450px;right:425.01px;">20,45</span>
<span class="t" style="font-size:14px;line-height:16px;color:#1e1e1e;top:641px;letter-spacing:-0.450px;right:293.61px;">20,45</span>
<span class="t" style="font-size:14px;line-height:16px;color:#1e1e1e;top:641px;letter-spacing:-0.450px;right:162.81px;">0,00 %</span>
<span class="t" style="font-size:14px;line-height:16px;color:#1e1e1e;top:641px;letter-spacing:0.301px;left:1529.16px;">23</span>
<span class="t" style="font-size:14px;line-height:16px;color:#1e1e1e;top:641px;letter-spacing:-0.450px;right:29.61px;">20,45</span>
<span class="t" style="font-size:14px;line-height:16px;color:#1e1e1e;top:669px;right:1430.16px;">2</span>
<span class="t" style="font-size:14px;line-height:16px;color:#1e1e1e;top:669px;letter-spacing:-0.450px;left:284.30px;width:0;display:flex;justify-content:center;">US</span>
<span class="t" style="font-size:14px;line-height:16px;color:#1e1e1e;top:669px;letter-spacing:0.173px;left:317.16px;">Dostawa</span>
<span class="t" style="font-size:14px;line-height:16px;color:#1e1e1e;top:669px;letter-spacing:-0.420px;transform:scaleX(0.9492);transform-origin:left center;left:764.96px;">OSS</span>
<span class="t" style="font-size:14px;line-height:16px;color:#1e1e1e;top:669px;right:798.66px;">1</span>
<span class="t" style="font-size:14px;line-height:16px;color:#1e1e1e;top:669px;letter-spacing:0.258px;left:973.66px;">usl</span>
<span class="t" style="font-size:14px;line-height:16px;color:#1e1e1e;top:669px;letter-spacing:-0.450px;right:532.11px;">7,31</span>
<span class="t" style="font-size:14px;line-height:16px;color:#1e1e1e;top:669px;letter-spacing:-0.450px;right:425.01px;">8,99</span>
<span class="t" style="font-size:14px;line-height:16px;color:#1e1e1e;top:669px;letter-spacing:-0.450px;right:293.61px;">8,99</span>
<span class="t" style="font-size:14px;line-height:16px;color:#1e1e1e;top:669px;letter-spacing:-0.450px;right:162.81px;">0,00 %</span>
<span class="t" style="font-size:14px;line-height:16px;color:#1e1e1e;top:669px;letter-spacing:0.301px;left:1529.16px;">23</span>
<span class="t" style="font-size:14px;line-height:16px;color:#1e1e1e;top:669px;letter-spacing:-0.450px;right:29.61px;">8,99</span>
<span class="t" style="font-size:14px;line-height:16px;color:#c4c4c4;top:696px;font-style:italic;letter-spacing:0.337px;left:317.16px;">Nazwa</span>
<div class="b" style="left:1045px;top:774px;width:612.5px;height:26px;background:#f6f6f6;"></div>
<span class="t" style="font-size:14px;line-height:16px;color:#1e1e1e;top:780px;letter-spacing:0.186px;left:1053.16px;">Kwota do zapłaty:</span>
<span class="t" style="font-size:14px;line-height:16px;color:#1e1e1e;top:780px;letter-spacing:-0.450px;right:25.61px;">29,44 PLN</span>
<div class="b" style="left:215.5px;top:814px;width:767.5px;height:25.5px;background:#f7f7f7;border:1px solid #e9e9e9;"></div>
<span class="t" style="font-size:14px;line-height:16px;color:#1e1e1e;top:820px;letter-spacing:0.128px;left:224.16px;">Promocje:</span>
<span class="t" style="font-size:14px;line-height:16px;color:#1e1e1e;top:820px;right:698.16px;">0</span>
<span class="t" style="font-size:16px;line-height:17px;color:#1b6e9c;top:872px;font-weight:bold;letter-spacing:0.608px;left:214.54px;">PODSUMOWANIE</span>
<div class="b" style="left:215px;top:901.5px;width:1443px;height:1px;background:#dadada;"></div>
<span class="t" style="font-size:14px;line-height:16px;color:#1e1e1e;top:917px;letter-spacing:0.048px;left:214.66px;">Wystawił(a):</span>
<div class="b" style="left:318px;top:911px;width:665px;height:27px;background:#fff;"></div>
<span class="t" style="font-size:14px;line-height:16px;color:#1e1e1e;top:917px;letter-spacing:0.290px;left:320.16px;">Michał  Wrębiak</span>
<svg class="b" style="left:966.1px;top:921.3px;" width="9.8" height="6.9" viewBox="0 0 9.8 6.9"><path d="M1 1 L4.9 5.9 L8.8 1" fill="none" stroke="#111" stroke-width="1.9" stroke-linecap="round" stroke-linejoin="round"/></svg>
<span class="t" style="font-size:14px;line-height:16px;color:#1e1e1e;top:947px;letter-spacing:0.079px;left:214.66px;">Odebrał(a):</span>
<div class="b" style="left:318px;top:941px;width:665px;height:27px;background:#fff;"></div>
<svg class="b" style="left:966.1px;top:951.3px;" width="9.8" height="6.9" viewBox="0 0 9.8 6.9"><path d="M1 1 L4.9 5.9 L8.8 1" fill="none" stroke="#111" stroke-width="1.9" stroke-linecap="round" stroke-linejoin="round"/></svg>
<span class="t" style="font-size:14px;line-height:16px;color:#1e1e1e;top:994px;letter-spacing:0.135px;left:214.66px;">Kategoria:</span>
<div class="b" style="left:318px;top:987.5px;width:665px;height:27px;background:#fff;"></div>
<span class="t" style="font-size:14px;line-height:16px;color:#1e1e1e;top:994px;letter-spacing:0.369px;left:320.16px;">Allegro</span>
<svg class="b" style="left:966.1px;top:998.3px;" width="9.8" height="6.9" viewBox="0 0 9.8 6.9"><path d="M1 1 L4.9 5.9 L8.8 1" fill="none" stroke="#111" stroke-width="1.9" stroke-linecap="round" stroke-linejoin="round"/></svg>
<div class="b" style="left:1044.5px;top:911px;width:287.3px;height:25.5px;background:#fff;"></div>
<span class="t" style="font-size:14px;line-height:16px;color:#1e1e1e;top:916px;letter-spacing:0.276px;left:1046.66px;">Gotówka</span>
<svg class="b" style="left:1291.1px;top:920.3px;" width="9.8" height="6.9" viewBox="0 0 9.8 6.9"><path d="M1 1 L4.9 5.9 L8.8 1" fill="none" stroke="#111" stroke-width="1.9" stroke-linecap="round" stroke-linejoin="round"/></svg>
<div class="b" style="left:1316px;top:919px;width:9px;height:1.6px;background:#222;"></div>
<div class="b" style="left:1316px;top:922.5px;width:9px;height:1.6px;background:#222;"></div>
<div class="b" style="left:1316px;top:926px;width:9px;height:1.6px;background:#222;"></div>
<div class="b" style="left:1335px;top:911px;width:111px;height:25.5px;background:#fff;"></div>
<svg class="b" style="left:1338px;top:914.5px;" width="18" height="18" viewBox="0 0 18 18"><circle cx="9" cy="9" r="7.6" fill="#41508f" stroke="#2a3564" stroke-width="1.2"/></svg>
<span class="t" style="font-size:14px;line-height:16px;color:#1e1e1e;top:916px;letter-spacing:-0.450px;right:236.61px;">100,00 %</span>
<div class="b" style="left:1449.4px;top:911px;width:182.6px;height:25.5px;background:#fff;"></div>
<span class="t" style="font-size:14px;line-height:16px;color:#1e1e1e;top:916px;letter-spacing:-0.450px;right:50.11px;">29,44 PLN</span>
<svg class="b" style="left:1639px;top:916.5px;" width="14" height="14" viewBox="0 0 14 14"><path d="M1 1L13 13M13 1L1 13" fill="none" stroke="#bdbdbd" stroke-width="1.2"/></svg>
<div class="b" style="left:1044.5px;top:939.5px;width:287.3px;height:25.5px;background:#fff;"></div>
<span class="t" style="font-size:14px;line-height:16px;color:#c4c4c4;top:945px;font-style:italic;letter-spacing:0.094px;left:1046.66px;">Wybierz płatność gotówkową</span>
<svg class="b" style="left:1291.1px;top:948.8px;" width="9.8" height="6.9" viewBox="0 0 9.8 6.9"><path d="M1 1 L4.9 5.9 L8.8 1" fill="none" stroke="#111" stroke-width="1.9" stroke-linecap="round" stroke-linejoin="round"/></svg>
<div class="b" style="left:1316px;top:947.5px;width:9px;height:1.6px;background:#222;"></div>
<div class="b" style="left:1316px;top:951px;width:9px;height:1.6px;background:#222;"></div>
<div class="b" style="left:1316px;top:954.5px;width:9px;height:1.6px;background:#222;"></div>
<div class="b" style="left:1335px;top:939.5px;width:111px;height:25.5px;background:#f5f5f5;"></div>
<div class="b" style="left:1449.4px;top:939.5px;width:182.6px;height:25.5px;background:#f5f5f5;"></div>
<span class="t" style="font-size:14px;line-height:16px;color:#8c8c8c;top:988px;letter-spacing:0.250px;left:1043.66px;">Nie można dodawać płatności odroczonych do dokumentu bez kontrahenta</span>
<svg class="b" style="left:1667px;top:239.5px;" width="12" height="8.5" viewBox="0 0 12 8.5"><path d="M1 7.5L6 2L11 7.5" fill="none" stroke="#b4b4b4" stroke-width="1.8"/></svg>
<div class="b" style="left:1666px;top:255px;width:14px;height:602px;background:#bdbdbd;"></div>
<span class="t" style="font-size:11px;line-height:12px;color:#333;top:994px;letter-spacing:1.388px;left:1660.34px;">+/-</span>
<div class="b" style="left:597px;top:392px;width:485.5px;height:219px;background:#fff;border:1px solid #3a7aac;box-shadow:0 0 14px rgba(0,0,0,0.27);"></div>
<div class="b" style="left:606px;top:400.3px;width:16px;height:13.2px;background:#1c6fb4;"></div>
<span class="t" style="font-size:10.5px;line-height:12px;color:#fff;top:401px;letter-spacing:0.208px;left:607.37px;">Su</span>
<span class="t" style="font-size:12px;line-height:14px;color:#111;top:401px;letter-spacing:0.036px;left:626.78px;">Problem</span>
<svg class="b" style="left:1061.5px;top:401.5px;" width="11" height="11" viewBox="0 0 11 11"><path d="M0.5 0.5L10.5 10.5M10.5 0.5L0.5 10.5" fill="none" stroke="#222" stroke-width="1.1"/></svg>
<span class="t" style="font-size:12px;line-height:14px;color:#1e1e1e;top:435px;letter-spacing:0.009px;left:607.28px;">Nie można przydzielić miejsca obiektowi</span>
<span class="t" style="font-size:12px;line-height:14px;color:#1e1e1e;top:451px;letter-spacing:-0.049px;left:607.28px;">„ModelDanychContainer.Dokumenty”.'PK_Dokumenty' w bazie danych „Nexo_Centrum</span>
<span class="t" style="font-size:12px;line-height:14px;color:#1e1e1e;top:467px;letter-spacing:-0.075px;left:607.28px;">Jakości Michał Wrębiak”, ponieważ grupa plików „PRIMARY” jest pełna. Zwolnij miejsce</span>
<span class="t" style="font-size:12px;line-height:14px;color:#1e1e1e;top:483px;letter-spacing:0.010px;left:607.28px;">na dysku przez usunięcie niepotrzebnych plików, usunięcie obiektów z grupy plików,</span>
<span class="t" style="font-size:12px;line-height:14px;color:#1e1e1e;top:499px;letter-spacing:0.058px;left:607.28px;">dodanie plików do grupy lub włączenie opcji automatycznego przyrastania plików</span>
<span class="t" style="font-size:12px;line-height:14px;color:#1e1e1e;top:515px;letter-spacing:0.017px;left:607.28px;">istniejących w grupie.</span>
<span class="t" style="font-size:12px;line-height:14px;color:#1c6fb4;top:579px;letter-spacing:-0.269px;left:607.78px;">Pokaż szczegóły...</span>
<div class="b" style="left:997px;top:569.5px;width:75px;height:31.5px;background:#0b6fbb;border-radius:2px;"></div>
<span class="t" style="font-size:12.5px;line-height:14px;color:#fff;top:579px;font-weight:bold;left:1034.80px;width:0;display:flex;justify-content:center;">Ok</span>
<div class="b" style="left:0px;top:1010px;width:1680px;height:40px;background:#05070c;"></div>
<svg class="b" style="left:16px;top:1022px;" width="17" height="17" viewBox="0 0 17 17"><path d="M0 2.6L6.9 1.6V8H0ZM7.8 1.45L17 0V8H7.8ZM0 8.9H6.9V15.3L0 14.3ZM7.8 8.9H17V17L7.8 15.5Z" fill="#fff"/></svg>
<svg class="b" style="left:63px;top:1020px;" width="19" height="19" viewBox="0 0 19 19"><circle cx="11.2" cy="7.5" r="5.4" fill="none" stroke="#fff" stroke-width="1.3"/><path d="M7.4 11.4L1.5 17.5" stroke="#fff" stroke-width="1.4"/></svg>
<svg class="b" style="left:109px;top:1022px;" width="22" height="16" viewBox="0 0 22 16"><rect x="4.6" y="1.1" width="12.8" height="13.2" fill="none" stroke="#fff" stroke-width="1.2"/><path d="M3 3H0.8V12.6H3M19 3H21.2V12.6H19" fill="none" stroke="#fff" stroke-width="1.2"/></svg>
<svg class="b" style="left:160px;top:1021px;" width="22" height="21" viewBox="0 0 22 21"><path d="M1.2 9.5C2 3.8 6.2 0.8 11.2 0.8C17.2 0.8 20.6 5.2 20.6 10.4V12.6H7.6C7.8 15.6 10.4 17 13.4 17C15.8 17 17.8 16.4 19.6 15.4V19.2C17.8 20.2 15.4 20.7 12.8 20.7C7 20.7 3 17.4 3 11.8C3 8.8 4.6 6.2 7.2 4.8C4.4 5.4 2.4 7.2 1.2 9.5ZM7.7 9H14.8C14.8 6.4 13.4 4.8 11.2 4.8C9.2 4.8 7.9 6.6 7.7 9Z" fill="#1b7fd6"/></svg>
<svg class="b" style="left:209px;top:1020px;" width="23" height="19" viewBox="0 0 23 19"><path d="M0.5 2.5A1.5 1.5 0 0 1 2 1H8.5L10.5 3H21A1.5 1.5 0 0 1 22.5 4.5V18.5H0.5Z" fill="#f3c94f"/><rect x="0.5" y="5" width="22" height="13.5" fill="#fbe08b"/><path d="M5.5 18.5V12.5H17.5V18.5H14V15.5H9V18.5Z" fill="#3b9ad9"/></svg>
<svg class="b" style="left:256px;top:1017px;" width="25" height="25" viewBox="0 0 25 25"><ellipse cx="12.5" cy="12.5" rx="11.6" ry="11.8" fill="#e0182c"/><ellipse cx="12.5" cy="12.5" rx="5.2" ry="8.6" fill="#05070c"/></svg>
<svg class="b" style="left:305px;top:1017px;" width="25" height="25" viewBox="0 0 25 25"><g fill="#6f8f4a"><circle cx="12.5" cy="8.5" r="7.6"/><circle cx="6.5" cy="11.5" r="5.6"/><circle cx="18.5" cy="11.5" r="5.6"/><circle cx="12.5" cy="13.5" r="5.8"/></g><g fill="#4d6a33"><circle cx="9" cy="7" r="2.2"/><circle cx="16" cy="10" r="2.4"/><circle cx="8" cy="14" r="2"/><circle cx="14" cy="5" r="1.6"/></g><path d="M11.6 15H13.6V21.5L16.5 23H8.5L11.6 21.5Z" fill="#d9d9d0"/></svg>
<svg class="b" style="left:356px;top:1022px;" width="22" height="15" viewBox="0 0 22 15"><rect x="0" y="0" width="22" height="14.5" fill="#5db3ea"/><rect x="1.2" y="1.2" width="19.6" height="9.4" fill="#d8ecfa"/><circle cx="6.6" cy="5.8" r="3.6" fill="#3d8fd1"/><path d="M6.6 5.8V2.2A3.6 3.6 0 0 1 10.2 5.8Z" fill="#f2b636"/><rect x="12.2" y="2.2" width="7" height="1.6" fill="#3d8fd1"/><rect x="12.2" y="5" width="7" height="1.6" fill="#3d8fd1"/><rect x="12.2" y="7.8" width="7" height="1.6" fill="#3d8fd1"/></svg>
<div class="b" style="left:404px;top:1018px;width:24px;height:15px;background:#1378c8;"></div>
<svg class="b" style="left:404px;top:1018px;" width="24" height="15" viewBox="0 0 24 15"><path d="M2 8H8L10 4.5L12.5 12L14.5 6.5L15.8 8H21" fill="none" stroke="#fff" stroke-width="1.2"/><path d="M19.5 6.3L21.6 8L19.5 9.7Z" fill="#fff"/></svg>
<span class="t" style="left:404.5px;top:1031px;font-size:9.5px;letter-spacing:0.3px;"><span style="color:#1d8f8b">n</span><span style="color:#2f9c3e">e</span><span style="color:#e0a11b">x</span><span style="color:#e0312b">o</span></span>
<div class="b" style="left:441px;top:1010px;width:47.5px;height:40px;background:#35383d;"></div>
<div class="b" style="left:453px;top:1018px;width:24px;height:21.5px;background:#1c76c0;"></div>
<span class="t" style="font-size:15.5px;line-height:17px;color:#fff;top:1021px;letter-spacing:-0.465px;transform:scaleX(0.9624);transform-origin:left center;left:456.57px;">Su</span>
<svg class="b" style="left:501px;top:1016px;" width="26" height="26" viewBox="0 0 26 26"><path d="M12 5C5.5 5 1.5 9.5 1.5 14.5C1.5 19.5 5.5 23 10.5 23C13.5 23 13 20.5 14.5 19.5C16.5 18.2 20.5 19.5 21.5 15C22.6 9.5 18 5 12 5Z" fill="#e9edf2"/><circle cx="7" cy="12" r="1.9" fill="#e54b3c"/><circle cx="11.5" cy="9.2" r="1.9" fill="#f1c232"/><circle cx="16.3" cy="10.6" r="1.9" fill="#58b65c"/><circle cx="6.5" cy="17" r="1.9" fill="#3f8ed8"/><path d="M12.5 21.5L21.5 3.5L24.5 1L23.5 5L14.5 22.5Z" fill="#c8925a"/><path d="M21.5 3.5L24.5 1L23.5 5Z" fill="#e7c79d"/></svg>
<div class="b" style="left:200px;top:1048px;width:39.5px;height:2px;background:#76b9ed;"></div>
<div class="b" style="left:249px;top:1048px;width:39.5px;height:2px;background:#76b9ed;"></div>
<div class="b" style="left:298px;top:1048px;width:39px;height:2px;background:#76b9ed;"></div>
<div class="b" style="left:347px;top:1048px;width:39.7px;height:2px;background:#76b9ed;"></div>
<div class="b" style="left:396px;top:1048px;width:39px;height:2px;background:#76b9ed;"></div>
<div class="b" style="left:441px;top:1048px;width:47.5px;height:2px;background:#76b9ed;"></div>
<div class="b" style="left:493px;top:1048px;width:40px;height:2px;background:#76b9ed;"></div>
<svg class="b" style="left:1494px;top:1025.5px;" width="14" height="9" viewBox="0 0 14 9"><path d="M1 8L7 1.8L13 8" fill="none" stroke="#fff" stroke-width="1.3"/></svg>
<svg class="b" style="left:1516.5px;top:1023.5px;" width="17" height="14" viewBox="0 0 17 14"><g fill="none" stroke="#fff" stroke-width="1.1"><path d="M4.6 2.6H15.9V10.4H4.2"/><rect x="0.6" y="0.6" width="4" height="4"/><path d="M2.6 4.6V13.2H9.6M9.6 10.4V13.2"/></g></svg>
<svg class="b" style="left:1540.5px;top:1022px;" width="18" height="16" viewBox="0 0 18 16"><g fill="none" stroke="#fff" stroke-width="1.1"><path d="M0.8 5.5H3.4L6.6 2V14L3.4 10.5H0.8Z"/><path d="M9 5.6Q10.6 8 9 10.4M11.4 3.8Q14 8 11.4 12.2M13.8 2Q17.6 8 13.8 14"/></g></svg>
<span class="t" style="font-size:12px;line-height:14px;color:#ffffff;top:1014px;letter-spacing:-0.300px;left:1579.88px;">11:46</span>
<span class="t" style="font-size:12px;line-height:14px;color:#ffffff;top:1032px;letter-spacing:-0.360px;transform:scaleX(0.9730);transform-origin:left center;left:1566.78px;">03.06.2019</span>
<svg class="b" style="left:1639px;top:1022px;" width="17" height="16" viewBox="0 0 17 16"><path d="M0.7 0.7H16V11.5H10.5L8.3 14L6.2 11.5H0.7Z" fill="none" stroke="#fff" stroke-width="1.2"/></svg>
<div class="b" style="left:1675px;top:1010px;width:1px;height:40px;background:#5a5a5a;"></div>
</body></html>
